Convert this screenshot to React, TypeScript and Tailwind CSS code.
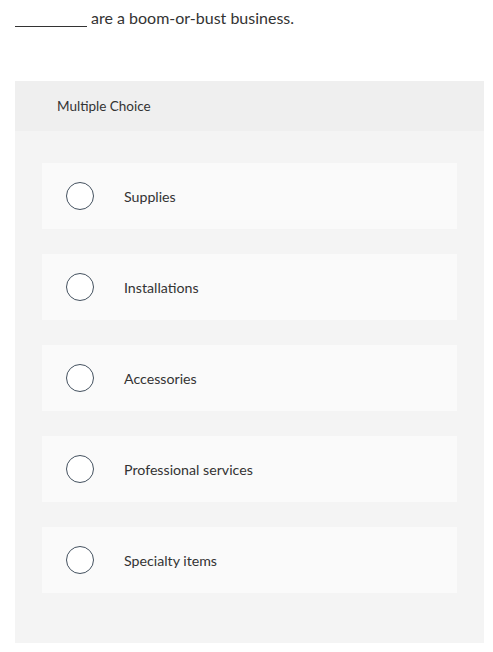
import React from "react";

const options = ["Supplies", "Installations", "Accessories", "Professional services", "Specialty items"];

export default function App() {
  return (
    <div className="w-[493px] h-[652px] bg-white overflow-hidden text-[#333333]" style={{ fontFamily: "Lato, 'Open Sans', sans-serif" }}>
      <div className="h-[81px] pl-[15px] pt-[8px]">
        <div className="flex items-start h-[20px] text-[16px] leading-[20px]">
          <span className="block w-[72px] h-[19px] border-b border-[#333] mr-[4px]"></span>
          <span>are a boom-or-bust business.</span>
        </div>
      </div>
      <div className="ml-[15px] w-[469px] bg-[#f4f4f4]">
        <div className="h-[50px] bg-[#efefef] flex items-center pl-[42px] text-[13.5px]">Multiple Choice</div>
        <div className="pt-[32px] pb-[50px] px-[27px] flex flex-col gap-[25px]">
          {options.map((o) => (
            <div key={o} className="h-[66px] bg-[#fafafa] flex items-center">
              <div className="ml-[24px] w-[28px] h-[28px] rounded-full border-[1.5px] border-[#44515f] bg-white"></div>
              <div className="ml-[30px] pt-[2px] text-[14.2px]">{o}</div>
            </div>
          ))}
        </div>
      </div>
    </div>
  );
}
